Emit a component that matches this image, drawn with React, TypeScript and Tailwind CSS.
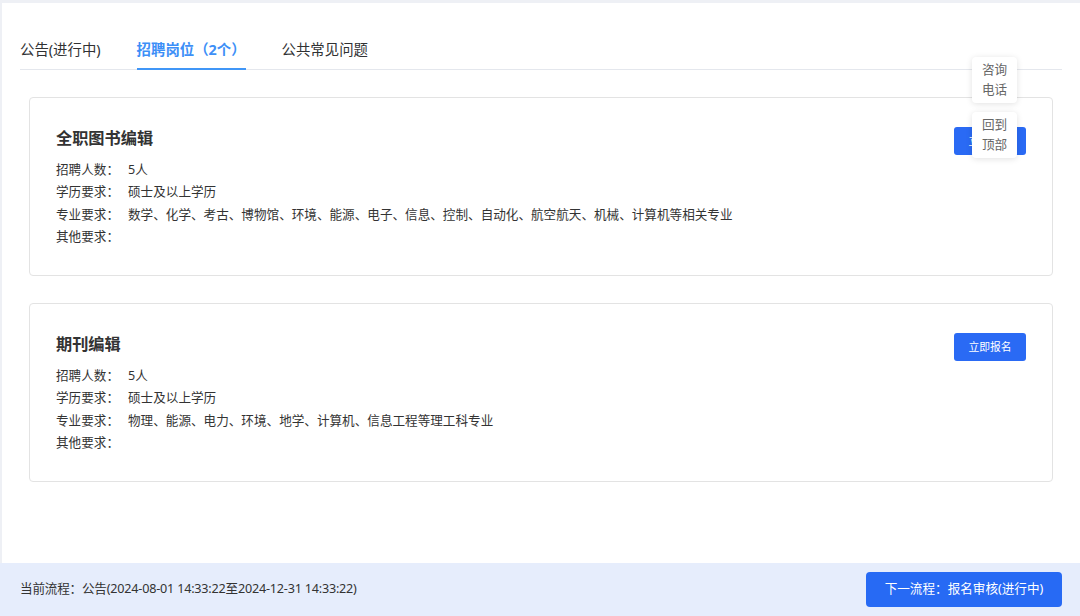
import * as React from "react";

const FONT = { fontFamily: '"Noto Sans", "Noto Sans CJK SC", sans-serif' };

interface Job {
  title: string;
  rows: [string, string][];
}

const jobs: Job[] = [
  {
    title: "全职图书编辑",
    rows: [
      ["招聘人数：", "5人"],
      ["学历要求：", "硕士及以上学历"],
      ["专业要求：", "数学、化学、考古、博物馆、环境、能源、电子、信息、控制、自动化、航空航天、机械、计算机等相关专业"],
      ["其他要求：", ""],
    ],
  },
  {
    title: "期刊编辑",
    rows: [
      ["招聘人数：", "5人"],
      ["学历要求：", "硕士及以上学历"],
      ["专业要求：", "物理、能源、电力、环境、地学、计算机、信息工程等理工科专业"],
      ["其他要求：", ""],
    ],
  },
];

function JobCard({ job }: { job: Job }) {
  return (
    <div className="flex justify-between rounded-[4px] border border-[#e3e3e3] bg-white pl-[26px] pr-[26px] pt-[29px] pb-[26px]">
      <div className="flex flex-col">
        <div className="text-[16.2px] font-bold leading-[22px] text-[#333]">{job.title}</div>
        <div className="mt-[10px] flex flex-col">
          {job.rows.map(([k, v]) => (
            <div key={k} className="flex h-[22.5px] items-center text-[12.6px] text-[#333]">
              <span className="w-[72px] shrink-0">{k}</span>
              <span>{v}</span>
            </div>
          ))}
        </div>
      </div>
      <button className="h-[28px] w-[72px] shrink-0 rounded-[3px] bg-[#2a6af4] text-[10.8px] text-white">
        立即报名
      </button>
    </div>
  );
}

function FloatBox({ lines }: { lines: string[] }) {
  return (
    <div className="flex h-[46px] w-[45px] flex-col items-center justify-center rounded-[4px] bg-white text-[12.6px] leading-[20px] text-[#666] shadow-[0_1px_6px_rgba(0,0,0,0.12)]">
      {lines.map((l) => (
        <span key={l}>{l}</span>
      ))}
    </div>
  );
}

export default function App() {
  const tabs = ["公告(进行中)", "招聘岗位（2个）", "公共常见问题"];
  return (
    <div className="relative flex h-[616px] w-[1080px] flex-col overflow-hidden bg-[#eef0f5]" style={FONT}>
      <div className="ml-[2px] mt-[3px] flex-1 bg-white pl-[18px] pr-[18px]">
        <div className="mt-[27px] flex h-[40px] items-stretch gap-[36px] border-b border-[#e4e7ed]">
          {tabs.map((t, i) => (
            <div
              key={t}
              className={
                i === 1
                  ? "relative flex items-center text-[14.4px] font-bold text-[#3d8ff7]"
                  : "flex items-center text-[14.4px] text-[#303133]"
              }
            >
              {t}
              {i === 1 ? <span className="absolute bottom-[-1px] left-0 right-0 h-[2px] bg-[#4096f7]" /> : null}
            </div>
          ))}
        </div>
        <div className="mt-[27px] flex flex-col gap-[27px] px-[9px]">
          {jobs.map((j) => (
            <JobCard key={j.title} job={j} />
          ))}
        </div>
      </div>
      <div className="flex h-[53px] items-center justify-between bg-[#e6edfc] pl-[20px] pr-[18px]">
        <span className="text-[12.6px] tracking-[-0.2px] text-[#333]">
          当前流程：公告(2024-08-01 14:33:22至2024-12-31 14:33:22)
        </span>
        <button className="h-[35px] w-[196px] rounded-[4px] bg-[#276af4] text-[12.6px] text-white">
          下一流程：报名审核(进行中)
        </button>
      </div>
      <div className="absolute left-[972px] top-[57px] flex flex-col gap-[9px]">
        <FloatBox lines={["咨询", "电话"]} />
        <FloatBox lines={["回到", "顶部"]} />
      </div>
    </div>
  );
}
